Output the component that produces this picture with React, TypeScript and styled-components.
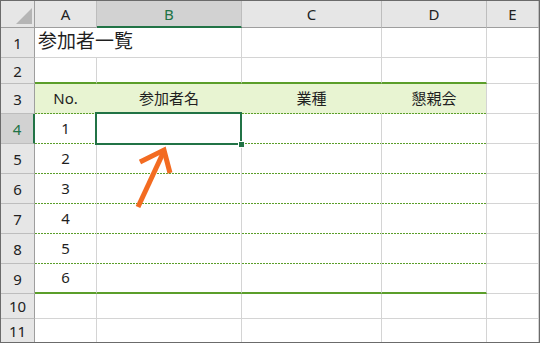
import styled, { createGlobalStyle, css } from "styled-components";

const GlobalStyle = createGlobalStyle`
  html, body {
    margin: 0;
    padding: 0;
    background: #ffffff;
  }
  * {
    box-sizing: border-box;
  }
`

const GREEN = "#5b9e2a"
const GRID = "#d4d4d4"
const SELECT = "#217346"
const BAND = "#e8f4d2"

const Sheet = styled.div`
  position: relative;
  width: 540px;
  height: 343px;
  border: 1px solid #6b6b6b;
  display: grid;
  grid-template-columns: 34px 62px 145px 140px 105px 1fr;
  grid-template-rows: 27px 30px 26px 30px repeat(6, 30px) 25px 1fr;
  font-family: "Noto Sans", "Noto Sans CJK JP", sans-serif;
  color: #1f1f1f;
  overflow: hidden;
`

const Corner = styled.div`
  background: #e6e6e6;
  border-right: 1px solid #9e9e9e;
  border-bottom: 1px solid #9e9e9e;
  display: flex;
  align-items: flex-end;
  justify-content: flex-end;
  padding: 0 2px 3px 0;
`

const Triangle = styled.div`
  width: 16px;
  height: 16px;
  background: #b5b5b5;
  clip-path: polygon(100% 0, 100% 100%, 0 100%);
`

const ColHead = styled.div<{ $selected?: boolean }>`
  background: ${p => (p.$selected ? "#d2d2d2" : "#e6e6e6")};
  border-right: 1px solid #bdbdbd;
  border-bottom: ${p => (p.$selected ? `2px solid ${SELECT}` : "1px solid #9e9e9e")};
  color: ${p => (p.$selected ? SELECT : "#222")};
  display: flex;
  align-items: center;
  justify-content: center;
  font-size: 15px;
  padding-top: ${p => (p.$selected ? "1px" : "0")};
`

const RowHead = styled.div<{ $selected?: boolean; $last?: boolean }>`
  background: ${p => (p.$selected ? "#d2d2d2" : "#e6e6e6")};
  border-right: ${p => (p.$selected ? `2px solid ${SELECT}` : "1px solid #9e9e9e")};
  border-bottom: ${p => (p.$last ? "none" : "1px solid #bdbdbd")};
  color: ${p => (p.$selected ? SELECT : "#222")};
  display: flex;
  align-items: center;
  justify-content: center;
  font-size: 15px;
`

type Bottom = "grid" | "green" | "dotted" | "none"

const Cell = styled.div<{
  $bottom?: Bottom
  $fill?: string
  $noRight?: boolean
  $span?: number
  $active?: boolean
}>`
  position: relative;
  background-color: ${p => p.$fill || "#ffffff"};
  border-right: 1px solid ${p => (p.$noRight ? p.$fill || "#fff" : GRID)};
  display: flex;
  align-items: center;
  justify-content: center;
  padding-bottom: 3px;
  font-size: 15px;
  white-space: nowrap;
  ${p => p.$span && css`grid-column: span ${p.$span};`}

  ${p => {
    switch (p.$bottom) {
      case "green":
        return css`border-bottom: 2px solid ${GREEN};`
      case "dotted":
        return css`
          border-bottom: none;
          background-image: linear-gradient(90deg, ${GREEN} 2px, transparent 2px);
          background-size: 3px 1px;
          background-position: left bottom;
          background-repeat: repeat-x;
        `
      case "none":
        return css`border-bottom: none;`
      default:
        return css`border-bottom: 1px solid ${GRID};`
    }
  }}

  ${p => p.$active && css`
    z-index: 2;
    &::before {
      content: "";
      position: absolute;
      top: -2px;
      left: -2px;
      right: -1px;
      bottom: -1px;
      border: 2px solid ${SELECT};
    }
  `}
`

const Title = styled(Cell)`
  justify-content: flex-start;
  padding: 0 0 5px 3px;
  font-size: 19px;
`

const FillHandle = styled.div`
  position: absolute;
  right: -4px;
  bottom: -4px;
  width: 7px;
  height: 7px;
  background: ${SELECT};
  border: 1px solid #fff;
`

const Arrow = styled.svg`
  position: absolute;
  left: -1px;
  top: -1px;
  pointer-events: none;
  z-index: 3;
`

const columns = ["A", "B", "C", "D", "E"]
const headers = ["No.", "参加者名", "業種", "懇親会"]

export default function App() {
  const dataRows = [1, 2, 3, 4, 5, 6]

  return (
    <>
      <GlobalStyle/>
      <Sheet>
        <Corner><Triangle/></Corner>
        {columns.map(c => (
          <ColHead key={c} $selected={c === "B"}>{c}</ColHead>
        ))}

        {/* 1 */}
        <RowHead>1</RowHead>
        <Title $span={2}>参加者一覧</Title>
        <Cell/>
        <Cell/>
        <Cell/>

        {/* 2 */}
        <RowHead>2</RowHead>
        {[0, 1, 2, 3].map(i => <Cell key={i} $bottom="green"/>)}
        <Cell/>

        {/* 3 */}
        <RowHead>3</RowHead>
        {headers.map((h, i) => (
          <Cell key={h} $fill={BAND} $noRight={i < 3} $bottom="dotted">{h}</Cell>
        ))}
        <Cell/>

        {dataRows.map(n => {
          const row = n + 3
          const bottom: Bottom = n === 6 ? "green" : "dotted"
          return [
            <RowHead key={`h${row}`} $selected={row === 4}>{row}</RowHead>,
            <Cell key={`a${row}`} $bottom={bottom}>{n}</Cell>,
            <Cell key={`b${row}`} $bottom={bottom} $active={row === 4}>
              {row === 4 && <FillHandle/>}
            </Cell>,
            <Cell key={`c${row}`} $bottom={bottom}/>,
            <Cell key={`d${row}`} $bottom={bottom}/>,
            <Cell key={`e${row}`}/>,
          ]
        })}

        {[10, 11].map(row => [
          <RowHead key={`h${row}`} $last={row === 11}>{row}</RowHead>,
          ...columns.map(c => (
            <Cell key={`${c}${row}`} $bottom={row === 11 ? "none" : "grid"}/>
          )),
        ])}

        <Arrow width="540" height="343" viewBox="0 0 540 343">
          <g fill="none" stroke="#f36b21" strokeWidth="5" strokeLinejoin="miter" strokeLinecap="butt">
            <line x1="138" y1="207" x2="164" y2="151"/>
            <polyline points="140,162 164,150 170,173"/>
          </g>
        </Arrow>
      </Sheet>
    </>
  )
}
